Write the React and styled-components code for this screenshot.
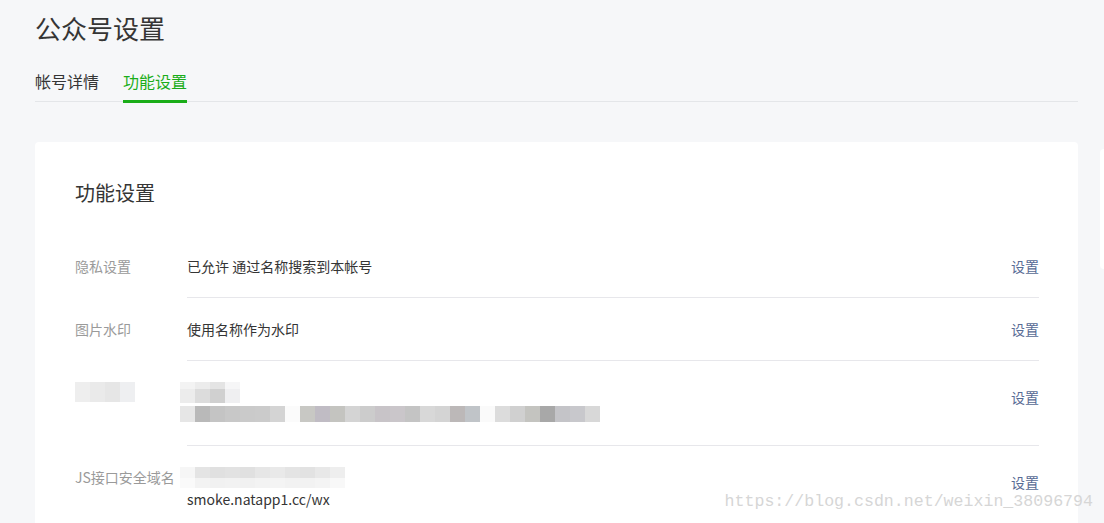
import React from "react";
import styled, { createGlobalStyle } from "styled-components";

const Global = createGlobalStyle`
  html, body { margin: 0; padding: 0; background: #f6f7f9; overflow: hidden; }
  body { font-family: "Microsoft YaHei", "Noto Sans CJK SC", sans-serif; color: #353535; }
`;

const Page = styled.div`
  position: relative;
  width: 1104px;
  height: 523px;
  overflow: hidden;
  padding: 10px 0 0 35px;
  box-sizing: border-box;
`;

const Title = styled.h1`
  margin: 0;
  font-size: 26px;
  line-height: 36px;
  font-weight: 400;
  color: #353535;
`;

const Tabs = styled.div`
  display: flex;
  gap: 24px;
  width: 1043px;
  margin-top: 24px;
  border-bottom: 1px solid #e4e6e9;
`;

const Tab = styled.div`
  font-size: 16px;
  line-height: 22px;
  padding-bottom: 8px;
  margin-bottom: -2px;
  border-bottom: 3px solid ${(p) => (p.$active ? "#1aad19" : "transparent")};
  color: ${(p) => (p.$active ? "#1aad19" : "#353535")};
`;

const Content = styled.div`
  display: flex;
  align-items: flex-start;
  gap: 22px;
  margin-top: 40px;
`;

const Card = styled.section`
  flex: 0 0 1043px;
  box-sizing: border-box;
  background: #fff;
  border-radius: 4px;
  padding: 38px 39px 0 40px;
  height: 420px;
`;

const SideCard = styled.aside`
  flex: 0 0 200px;
  height: 120px;
  margin-top: 7px;
  background: #fff;
  border-radius: 4px;
`;

const CardTitle = styled.h2`
  margin: 0 0 29px;
  font-size: 20px;
  line-height: 26px;
  font-weight: 400;
  color: #353535;
`;

const Row = styled.div`
  display: flex;
  align-items: flex-start;
`;

const Label = styled.div`
  flex: 0 0 112px;
  padding-top: 20px;
  font-size: 14px;
  line-height: 22px;
  color: #9a9a9a;
  white-space: nowrap;
`;

const Body = styled.div`
  flex: 1;
  display: flex;
  align-items: center;
  padding: 20px 0;
  border-bottom: ${(p) => (p.$last ? "none" : "1px solid #e7e7eb")};
`;

const Value = styled.div`
  flex: 1;
  font-size: 14px;
  line-height: 22px;
  color: #353535;
`;

const Line = styled.div`
  display: flex;
  align-items: center;
  height: 22px;
`;

const Action = styled.a`
  align-self: center;
  margin-top: ${(p) => (p.$multi ? "-12px" : "0")};
  font-size: 14px;
  line-height: 22px;
  color: #576b95;
  text-decoration: none;
  cursor: pointer;
`;

const Mosaic = styled.div`
  display: flex;
  flex-direction: column;
  margin-left: ${(p) => p.$shift || 0}px;
`;

const MosaicRow = styled.div`
  display: flex;
`;

const Cell = styled.span`
  display: block;
  width: 15px;
  height: ${(p) => p.$h}px;
  background: ${(p) => p.$c};
`;

const Watermark = styled.div`
  position: absolute;
  right: 11px;
  bottom: 10px;
  font-family: "Liberation Mono", "DejaVu Sans Mono", monospace;
  font-size: 16.6px;
  line-height: 22px;
  color: #d6d6d6;
  letter-spacing: 0;
`;

const MosaicBlock = ({ rows, shift }) => (
  <Mosaic $shift={shift}>
    {rows.map((r, i) => (
      <MosaicRow key={i}>
        {r.colors.map((c, j) => (
          <Cell key={j} $c={c} $h={r.h} />
        ))}
      </MosaicRow>
    ))}
  </Mosaic>
);

const labelMosaic = [
  { h: 20, colors: ["#eeeeee", "#eaeaea", "#e6e6e6", "#eeeff1"] },
];

const valueTop = [
  { h: 7, colors: ["#f3f3f3", "#ececec", "#e4e4e4", "#f6f6f7"] },
  { h: 14, colors: ["#ececec", "#dcdcdc", "#d0d0d0", "#efeff1"] },
];

const valueLine2 = [
  {
    h: 16,
    colors: [
      "#e6e6e6", "#b9b9b9", "#c4c4c4", "#c8c8c8", "#cacaca", "#cbcbcb", "#d4d4d4",
      "#fbfbfb", "#c8c8c4", "#c0bcc4", "#c4c4c0", "#d4d4d4", "#cccccc", "#c8c4c8",
      "#cac6ca", "#c4c4c4", "#d8d8d8", "#d4d4d4", "#bcb8b8", "#c0c4c8", "#fafafa",
      "#dcdcdc", "#d0d0d0", "#c4c4c0", "#a8a8a8", "#c4c4c8", "#c8c8cc", "#d8d8d8",
    ],
  },
];

const domainMosaic = [
  {
    h: 11,
    colors: ["#f6f6f6", "#e4e4e4", "#e0e0e0", "#e2e2e2", "#e0e0e0", "#e6e6e6", "#e9e9e9", "#e4e4e4", "#e2e2e2", "#e8e8e8", "#eeeeee"],
  },
  {
    h: 10,
    colors: ["#fafafa", "#f3f3f3", "#f1f1f1", "#f2f2f2", "#f1f1f1", "#f3f3f3", "#f4f4f4", "#f2f2f2", "#f2f2f2", "#f4f4f4", "#f8f8f8"],
  },
];

export default function App() {
  return (
    <>
      <Global />
      <Page>
        <Title>公众号设置</Title>
        <Tabs>
          <Tab>帐号详情</Tab>
          <Tab $active>功能设置</Tab>
        </Tabs>
        <Content>
          <Card>
            <CardTitle>功能设置</CardTitle>

            <Row>
              <Label>隐私设置</Label>
              <Body>
                <Value>已允许 通过名称搜索到本帐号</Value>
                <Action>设置</Action>
              </Body>
            </Row>

            <Row>
              <Label>图片水印</Label>
              <Body>
                <Value>使用名称作为水印</Value>
                <Action>设置</Action>
              </Body>
            </Row>

            <Row>
              <Label>
                <Line>
                  <MosaicBlock rows={labelMosaic} />
                </Line>
              </Label>
              <Body>
                <Value>
                  <Line>
                    <MosaicBlock rows={valueTop} shift={-7} />
                  </Line>
                  <Line>
                    <MosaicBlock rows={valueLine2} shift={-7} />
                  </Line>
                </Value>
                <Action $multi>设置</Action>
              </Body>
            </Row>

            <Row>
              <Label>JS接口安全域名</Label>
              <Body $last>
                <Value>
                  <Line>
                    <MosaicBlock rows={domainMosaic} shift={-7} />
                  </Line>
                  <Line>smoke.natapp1.cc/wx</Line>
                </Value>
                <Action $multi>设置</Action>
              </Body>
            </Row>
          </Card>
          <SideCard />
        </Content>
        <Watermark>https://blog.csdn.net/weixin_38096794</Watermark>
      </Page>
    </>
  );
}
